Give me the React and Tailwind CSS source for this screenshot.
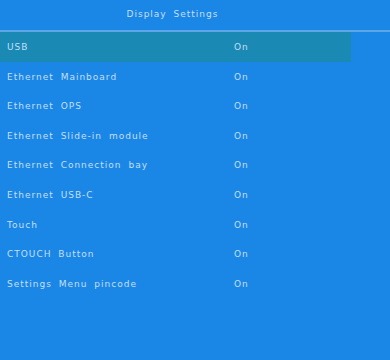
const rows = [
  "USB",
  "Ethernet Mainboard",
  "Ethernet OPS",
  "Ethernet Slide-in module",
  "Ethernet Connection bay",
  "Ethernet USB-C",
  "Touch",
  "CTOUCH Button",
  "Settings Menu pincode",
]

const App = () => {
  return (
    <div className="w-[390px] h-[360px] overflow-hidden bg-[#1a87e6] text-[#c4dff5] font-['DejaVu_Sans',sans-serif] text-[9px] tracking-[1px] [word-spacing:3px]">
      <div className="w-[345px] h-[30px] flex items-center justify-center">Display Settings</div>
      <div className="h-[2px] bg-[#5fa6e8]" />
      <div className="flex flex-col">
        {rows.map((label, i) => (
          <div
            key={label}
            className={`w-[351px] h-[29.6px] flex items-center pl-[7px] pt-[2px] ${i === 0 ? "bg-[#1a8ab5]" : ""}`}
          >
            <span className="w-[227px]">{label}</span>
            <span>On</span>
          </div>
        ))}
      </div>
    </div>
  )
}

export default App
